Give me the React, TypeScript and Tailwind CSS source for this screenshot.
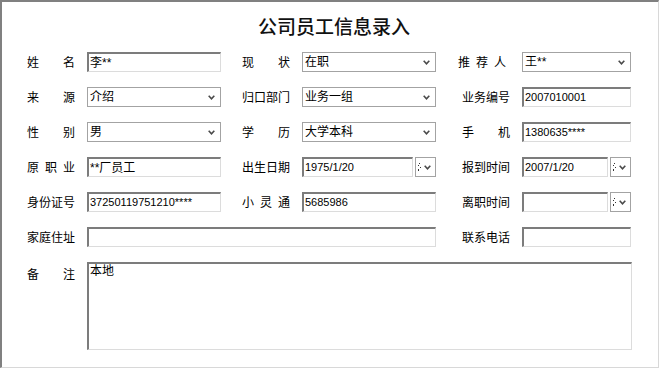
import React from "react";

const cjk = { fontFamily: '"Liberation Sans", "Noto Sans CJK SC", sans-serif' };

function Label({ text, className = "" }: { text: string; className?: string }) {
  // justified across 48px like the old form labels
  return (
    <div
      className={`w-12 shrink-0 flex justify-between text-[12px] leading-none text-black pt-[2px] ${className}`}
    >
      {text.split("").map((c, i) => (
        <span key={i}>{c}</span>
      ))}
    </div>
  );
}

function Chevron() {
  return (
    <svg width="7" height="5" viewBox="0 0 7 5" className="shrink-0">
      <path d="M0.7 0.8 L3.5 3.8 L6.3 0.8" fill="none" stroke="#4a4a4a" strokeWidth="1.6" />
    </svg>
  );
}

function TextBox({ value = "", width, small }: { value?: string; width: string; small?: boolean }) {
  return (
    <div
      className={`${width} h-5 shrink-0 flex items-center pl-[1px] border-t-2 border-l-2 border-r border-b border-t-[#7c7c7c] border-l-[#7c7c7c] border-r-[#dcdcdc] border-b-[#dcdcdc] bg-white ${small ? "text-[11px]" : "text-[12px]"} leading-none text-black whitespace-nowrap overflow-hidden`}
    >
      {value}
    </div>
  );
}

function SelectBox({ value, width }: { value: string; width: string }) {
  return (
    <div
      className={`${width} h-5 shrink-0 flex items-center pl-[2px] pr-[5px] border border-[#a3a3a3] bg-white text-[12px] leading-none text-black`}
    >
      <span className="flex-1">{value}</span>
      <Chevron />
    </div>
  );
}

function DateBox({ value = "", inputWidth }: { value?: string; inputWidth: string }) {
  return (
    <div className="flex shrink-0">
      <TextBox value={value} width={inputWidth} small />
      <div className="ml-[2px] w-[21px] h-5 flex items-center border border-[#a3a3a3] bg-white">
        <svg width="3" height="8" viewBox="0 0 3 8" className="ml-[2px]">
          <rect x="1" y="0" width="1" height="1" fill="#333" />
          <rect x="0" y="2" width="1" height="1" fill="#333" />
          <rect x="2" y="4" width="1" height="1" fill="#333" />
          <rect x="0" y="6" width="1" height="2" fill="#333" />
        </svg>
        <span className="ml-auto mr-[4px] flex">
          <Chevron />
        </span>
      </div>
    </div>
  );
}

export default function App() {
  return (
    <div className="bg-white w-[660px] h-[370px]" style={cjk}>
      <div className="w-[659px] h-[368px] border-t-2 border-l-2 border-r border-b border-t-[#808080] border-l-[#808080] border-r-[#d8d8d8] border-b-[#d8d8d8] bg-white">
        <div className="h-[50px] pt-[15px] pl-[8px] text-center">
          <h1 className="text-[19px] leading-[22px] font-medium text-[#111]">公司员工信息录入</h1>
        </div>

        <div className="pl-[25px] flex flex-col gap-[15px]">
          <div className="flex h-5 items-center">
            <Label text="姓　名" />
            <div className="ml-3"><TextBox value="李**" width="w-[134px]" /></div>
            <Label text="现　状" className="ml-[21px]" />
            <div className="ml-3"><SelectBox value="在职" width="w-[134px]" /></div>
            <div className="ml-[22px] w-[52px] shrink-0 flex gap-[6px] text-[12px] leading-none pt-[2px]">
              <span>推</span><span>荐</span><span>人</span>
            </div>
            <div className="ml-3"><SelectBox value="王**" width="w-[109px]" /></div>
          </div>

          <div className="flex h-5 items-center">
            <Label text="来　源" />
            <div className="ml-3"><SelectBox value="介绍" width="w-[134px]" /></div>
            <Label text="归口部门" className="ml-[21px]" />
            <div className="ml-3"><SelectBox value="业务一组" width="w-[134px]" /></div>
            <Label text="业务编号" className="ml-[26px]" />
            <div className="ml-3"><TextBox value="2007010001" width="w-[109px]" small /></div>
          </div>

          <div className="flex h-5 items-center">
            <Label text="性　别" />
            <div className="ml-3"><SelectBox value="男" width="w-[134px]" /></div>
            <Label text="学　历" className="ml-[21px]" />
            <div className="ml-3"><SelectBox value="大学本科" width="w-[134px]" /></div>
            <Label text="手　机" className="ml-[26px]" />
            <div className="ml-3"><TextBox value="1380635****" width="w-[109px]" small /></div>
          </div>

          <div className="flex h-5 items-center">
            <Label text="原职业" />
            <div className="ml-3"><TextBox value="**厂员工" width="w-[134px]" /></div>
            <Label text="出生日期" className="ml-[21px]" />
            <div className="ml-3"><DateBox value="1975/1/20" inputWidth="w-[111px]" /></div>
            <Label text="报到时间" className="ml-[26px]" />
            <div className="ml-3"><DateBox value="2007/1/20" inputWidth="w-[86px]" /></div>
          </div>

          <div className="flex h-5 items-center">
            <Label text="身份证号" />
            <div className="ml-3"><TextBox value="37250119751210****" width="w-[134px]" small /></div>
            <Label text="小灵通" className="ml-[21px]" />
            <div className="ml-3"><TextBox value="5685986" width="w-[134px]" small /></div>
            <Label text="离职时间" className="ml-[26px]" />
            <div className="ml-3"><DateBox inputWidth="w-[86px]" /></div>
          </div>

          <div className="flex h-5 items-center">
            <Label text="家庭住址" />
            <div className="ml-3"><TextBox width="w-[349px]" /></div>
            <Label text="联系电话" className="ml-[26px]" />
            <div className="ml-3"><TextBox width="w-[109px]" /></div>
          </div>

          <div className="flex items-start">
            <Label text="备　注" className="mt-[5px]" />
            <div className="ml-3 w-[545px] h-[88px] border-t-2 border-l-2 border-r border-b border-t-[#7c7c7c] border-l-[#7c7c7c] border-r-[#dcdcdc] border-b-[#dcdcdc] bg-white text-[12px] leading-[14px] pl-[1px] text-black">
              本地
            </div>
          </div>
        </div>
      </div>
    </div>
  );
}
